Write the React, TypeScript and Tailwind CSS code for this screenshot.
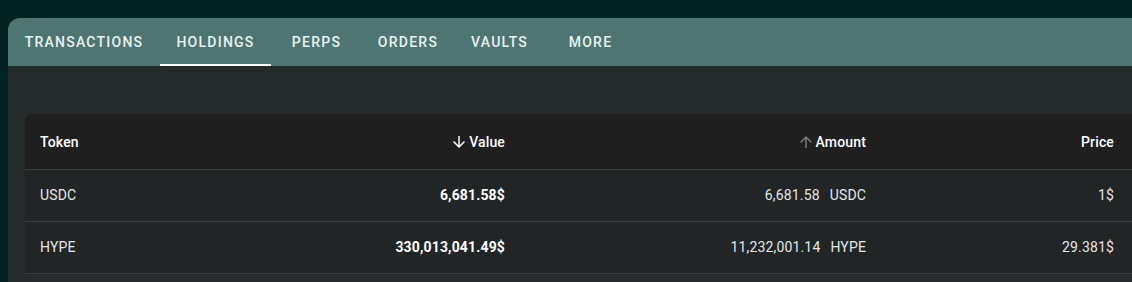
import React from "react";

const tabs = [
  { label: "TRANSACTIONS", w: "w-[152px]", active: false },
  { label: "HOLDINGS", w: "w-[111px]", active: true },
  { label: "PERPS", w: "w-[91px]", active: false },
  { label: "ORDERS", w: "w-[92px]", active: false },
  { label: "VAULTS", w: "w-[91px]", active: false },
  { label: "MORE", w: "w-[91px]", active: false },
];

const rows = [
  { token: "USDC", value: "6,681.58$", amount: "6,681.58", price: "1$" },
  { token: "HYPE", value: "330,013,041.49$", amount: "11,232,001.14", price: "29.381$" },
];

function Arrow({ down, className }: { down: boolean; className: string }) {
  return (
    <svg viewBox="0 0 24 24" className={className} fill="currentColor" style={{ transform: down ? undefined : "rotate(180deg)" }}>
      <path d="M20 12l-1.41-1.41L13 16.17V4h-2v12.17l-5.58-5.59L4 12l8 8 8-8z" />
    </svg>
  );
}

export default function App() {
  return (
    <div
      className="w-[1132px] h-[282px] overflow-hidden bg-[#012220] pt-[18px] pl-2"
      style={{ fontFamily: "Roboto, 'Noto Sans', sans-serif" }}
    >
      <div className="w-[1160px] h-[300px] rounded-tl-[12px] overflow-hidden bg-[#252a2a] flex flex-col">
        <div className="h-[48px] bg-[#4e7571] flex shrink-0">
          {tabs.map((t) => (
            <div
              key={t.label}
              className={`${t.w} relative flex items-center justify-center text-[14px] font-medium tracking-[1.25px] text-[#e8f2f1]`}
            >
              {t.label}
              {t.active && <div className="absolute left-0 right-0 bottom-0 h-[2px] bg-white" />}
            </div>
          ))}
        </div>
        <div className="pt-12 pl-[17px]">
          <div className="w-[1140px] rounded-tl-[8px] overflow-hidden bg-[#222526] text-[14px] tracking-[0.15px]">
            <div className="grid grid-cols-[248px_248px_361px_1fr] h-[56px] bg-[#1f1f1f] border-b border-[#3b3e3f] font-medium text-white">
              <div className="flex items-center pl-[15px] pt-[1px]">Token</div>
              <div className="flex items-center justify-end pr-[16px] pt-[1px]">
                <Arrow down className="w-[18px] h-[18px] mr-[1px] text-white" />
                Value
              </div>
              <div className="flex items-center justify-end pr-[16px] pt-[1px]">
                <Arrow down={false} className="w-[18px] h-[18px] mr-[1px] text-[#7a7a7a]" />
                Amount
              </div>
              <div className="flex items-center justify-end w-[248px] pr-[16px] pt-[1px]">Price</div>
            </div>
            {rows.map((r) => (
              <div
                key={r.token}
                className="grid grid-cols-[248px_248px_361px_1fr] h-[52px] border-b border-[#3b3e3f] text-[#e4e6e6]"
              >
                <div className="flex items-center pl-[15px]">{r.token}</div>
                <div className="flex items-center justify-end pr-[16px] font-bold text-white">{r.value}</div>
                <div className="flex items-center justify-end pr-[16px]">
                  <span>{r.amount}</span>
                  <span className="ml-[10px]">{r.token}</span>
                </div>
                <div className="flex items-center justify-end w-[248px] pr-[16px]">{r.price}</div>
              </div>
            ))}
          </div>
        </div>
      </div>
    </div>
  );
}
